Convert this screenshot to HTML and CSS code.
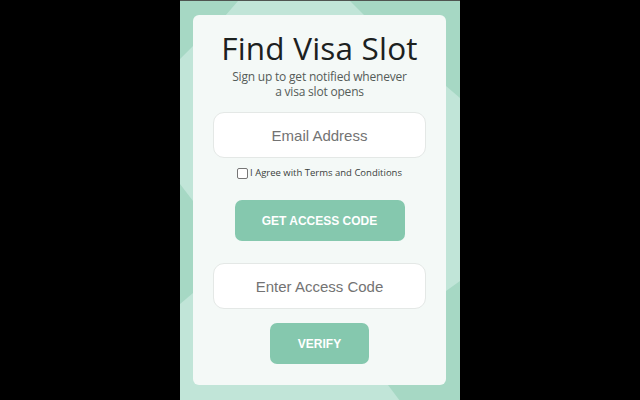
FILE: index.html
```html
<!DOCTYPE html>
<html>
<head>
<meta charset="utf-8">
<link rel="stylesheet" href="styles.css">
</head>
<body>
<div class="panel">
  <div class="card">
    <h1 class="title">Find Visa Slot</h1>
    <p class="subtitle">Sign up to get notified whenever<br>a visa slot opens</p>
    <div class="field">Email Address</div>
    <label class="agree"><span class="box"></span>I Agree with Terms and Conditions</label>
    <button class="btn btn-wide">GET ACCESS CODE</button>
    <div class="field field-code">Enter Access Code</div>
    <button class="btn btn-small">VERIFY</button>
  </div>
</div>
</body>
</html>
```
FILE: styles.css
```css
html, body {
  margin: 0;
  padding: 0;
  background: #000;
}
body {
  display: flex;
  justify-content: center;
  height: 400px;
  overflow: hidden;
}
.panel {
  width: 280px;
  height: 400px;
  box-sizing: border-box;
  border-top: 1px solid #4f5551;
  padding: 14px 14px 0 13px;
  background-color: #c1e5d8;
  background-image: url("data:image/svg+xml,%3Csvg xmlns='http://www.w3.org/2000/svg' width='280' height='400' viewBox='0 0 280 400'%3E%3Cg fill='%23a6d8c4'%3E%3Cpolygon points='0,0 58,0 45,15 13,45 0,58'/%3E%3Cpolygon points='170,0 280,0 280,97 266,85 185,15'/%3E%3Cpolygon points='0,183 13,200 40,245 13,292 0,303'/%3E%3Cpolygon points='280,280 266,290 205,380 220,400 280,400'/%3E%3C/g%3E%3C/svg%3E");
  background-repeat: no-repeat;
}
.card {
  width: 253px;
  height: 370px;
  box-sizing: border-box;
  background: #f4f9f7;
  border-radius: 6px;
  display: flex;
  flex-direction: column;
  align-items: center;
  padding-top: 14px;
}
.title {
  margin: 0;
  font-family: "Open Sans", sans-serif;
  font-weight: 500;
  font-size: 31.5px;
  line-height: 38px;
  color: #1c211f;
  letter-spacing: 0.2px;
}
.subtitle {
  margin: 2px 0 0;
  font-family: "Open Sans", sans-serif;
  font-size: 12px;
  line-height: 15px;
  letter-spacing: -0.2px;
  color: #555c59;
  text-align: center;
}
.field {
  margin-top: 13px;
  width: 213px;
  height: 46px;
  box-sizing: border-box;
  background: #fff;
  border: 1px solid #e4e8e6;
  border-radius: 11px;
  display: flex;
  align-items: center;
  justify-content: center;
  font-family: "Liberation Sans", Arial, sans-serif;
  font-size: 15px;
  color: #737373;
}
.agree {
  margin-top: 9px;
  display: flex;
  align-items: center;
  font-family: "Open Sans", sans-serif;
  font-size: 9.5px;
  color: #3a3f3d;
  line-height: 12px;
}
.box {
  width: 9px;
  height: 9px;
  border: 1px solid #767676;
  border-radius: 2px;
  background: #fff;
  margin-right: 2px;
}
.btn {
  border: none;
  background: #85c8ae;
  color: #fff;
  font-family: "Liberation Sans", Arial, sans-serif;
  font-weight: bold;
  font-size: 12px;
  border-radius: 7px;
  height: 41px;
  padding: 0;
}
.btn-wide {
  margin-top: 21px;
  width: 170px;
}
.field-code {
  margin-top: 22px;
}
.btn-small {
  margin-top: 14px;
  width: 99px;
}
```
